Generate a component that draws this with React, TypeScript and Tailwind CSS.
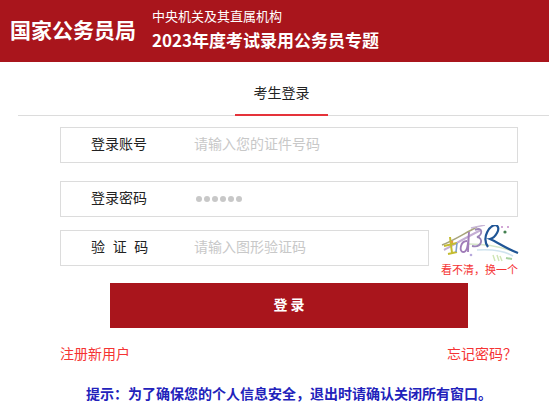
const fontStack = "font-['Microsoft_YaHei','Noto_Sans_CJK_SC',sans-serif]";

function Captcha() {
  return (
    <svg width="78" height="38" viewBox="0 0 78 38" fill="none" className="block">
      <path d="M1 20 C12 16 24 8 36 2" stroke="#a8a47c" strokeWidth="1.6" />
      <path d="M3 25 C14 19 26 12 40 5" stroke="#c4aed4" strokeWidth="2" />
      <path d="M28 19 C44 19 62 22 77 28" stroke="#d5e6c8" strokeWidth="1.6" />
      <path d="M36 25 C50 24 62 25 72 31" stroke="#cfe3ee" strokeWidth="1.6" />
      <path d="M9 12 L11 28 M3 21 L16 18 M7 29 L16 27" stroke="#c4bc30" strokeWidth="2" />
      <path d="M26 16 C19 16 18 27 22 27 C27 27 27 18 28 7 L27 27" stroke="#a07cb8" strokeWidth="1.8" />
      <path d="M16 18 L15 27" stroke="#7f9fcb" strokeWidth="1.6" />
      <path d="M34 5 C42 1 42 10 36 12 C43 13 41 23 31 21" stroke="#9c84b8" strokeWidth="1.8" />
      <path d="M30 3 L44 0" stroke="#c8b6d6" strokeWidth="1.5" />
      <path d="M47 22 C40 12 49 0 55 0 C61 3 54 13 49 14 C56 17 66 24 77 28" stroke="#1f5596" strokeWidth="2.2" />
      <circle cx="61" cy="2" r="1" fill="#c48ac8" />
      <circle cx="64" cy="7" r="1.6" fill="#437f50" />
      <circle cx="67" cy="2" r="1" fill="#c48ac8" />
      <circle cx="30" cy="30" r="1.3" fill="#b7a8dc" />
      <circle cx="11" cy="17" r="1.3" fill="#e0a040" />
      <path d="M52 30 L54 36 M56 30 L58 36 M59 31 L61 36" stroke="#cfe5b4" strokeWidth="1.4" />
      <path d="M65 33 L71 34" stroke="#a6d0a0" strokeWidth="2" />
    </svg>
  );
}

function Field({ label, hint, masked, wide = true, spaced }: { label: string; hint?: string; masked?: boolean; wide?: boolean; spaced?: boolean }) {
  return (
    <div className={`flex h-9 items-center border border-[#dcdcdc] ${wide ? "w-[458px]" : "w-[369px]"}`}>
      <span className={`ml-[30px] w-[103px] pb-[4px] text-sm text-[#222] ${spaced ? "whitespace-pre [word-spacing:4.5px]" : ""}`}>{label}</span>
      {masked ? (
        <span className="ml-[2px] flex gap-[2px]">
          {[0, 1, 2, 3, 4, 5].map((i) => (
            <span key={i} className="size-[6px] rounded-full bg-[#c8c8c8]" />
          ))}
        </span>
      ) : (
        <span className="pb-[4px] text-sm text-[#c8c8c8]">{hint}</span>
      )}
    </div>
  );
}

export default function App() {
  return (
    <div className={`h-[418px] w-[549px] overflow-hidden bg-white ${fontStack}`}>
      <header className="flex h-[62px] items-center bg-[#a9151c] pl-[10px] text-white">
        <div className="w-[143px] pb-[3px] text-[21px] font-bold leading-none">国家公务员局</div>
        <div className="ml-[-1px] pb-[5px]">
          <div className="text-[13px] leading-[18px]">中央机关及其直属机构</div>
          <div className="mt-[5px] text-[17px] font-bold leading-[20px]">2023年度考试录用公务员专题</div>
        </div>
      </header>

      <div className="ml-[18px] flex h-[54px] border-b border-[#dcdcdc] pl-[217px]">
        <div className="mb-[-1px] flex w-[93px] justify-center border-b-2 border-[#e5323a] pt-[20px] text-sm text-[#222]">
          考生登录
        </div>
      </div>

      <div className="ml-[60px] mt-[11px]">
        <Field label="登录账号" hint="请输入您的证件号码" />
        <div className="mt-[18px]">
          <Field label="登录密码" masked />
        </div>
        <div className="mt-[13px] flex h-9">
          <Field label="验 证 码" hint="请输入图形验证码" wide={false} spaced />
          <div className="ml-[12px] mt-[-5px] w-[78px]">
            <Captcha />
            <div className="mt-[-1px] whitespace-nowrap text-[11px] leading-[14px] text-[#f53333]">看不清，换一个</div>
          </div>
        </div>
        <div className="ml-[50px] mt-[17px] flex h-[45px] w-[358px] items-center justify-center bg-[#a9151c] pb-[3px] text-sm font-bold text-white">
          登 录
        </div>
        <div className="mt-[15px] flex w-[457px] justify-between text-sm leading-5 text-[#f53333]">
          <span>注册新用户</span>
          <span>忘记密码？</span>
        </div>
      </div>

      <div className="ml-[86px] mt-[20px] whitespace-nowrap text-sm font-bold leading-5 text-[#2222bb]">
        提示：为了确保您的个人信息安全，退出时请确认关闭所有窗口。
      </div>
    </div>
  );
}
